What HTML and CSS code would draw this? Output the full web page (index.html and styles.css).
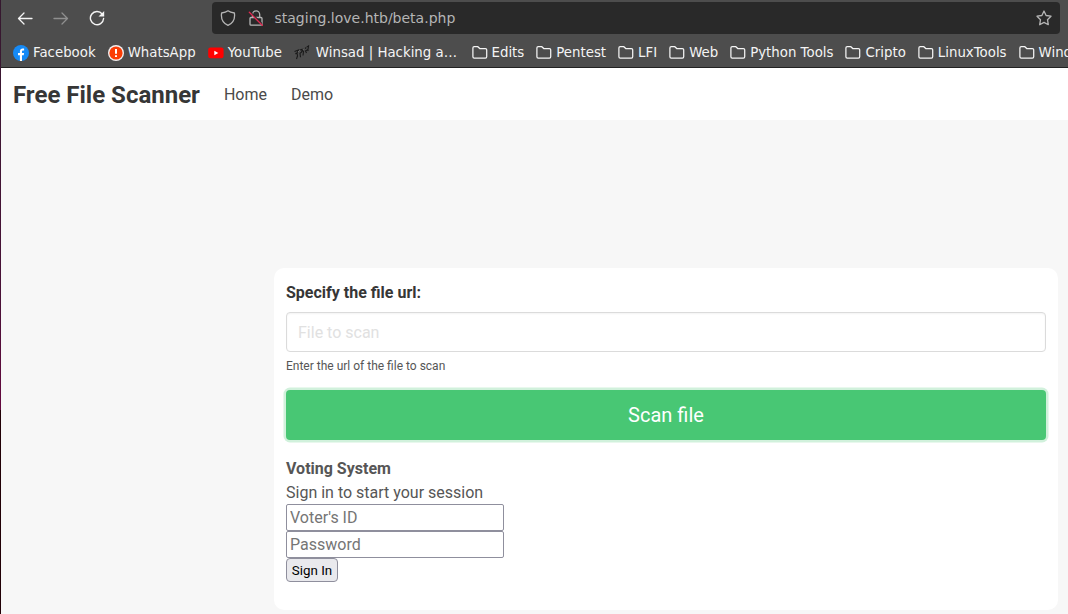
FILE: index.html
```
<!DOCTYPE html>
<html lang="en">
<head>
<meta charset="utf-8">
<title>Free File Scanner</title>
<link rel="stylesheet" href="styles.css">
</head>
<body>
<svg class="defs" width="0" height="0"><symbol id="folder" viewBox="0 0 16 16"><path d="M2.2 1.700h3.600l2 1.800h5.600q1.300 0 1.300 1.300v6.900q0 1.300-1.300 1.300H2.200Q.9 13 .9 11.700V3Q.9 1.700 2.200 1.700z" fill="none" stroke="#f4f4f4" stroke-width="1.250"/></symbol></svg>
<div class="window">
  <header class="chrome">
    <div class="toolbar">
      <div class="controls">
        <svg class="icon" viewBox="0 0 16 16"><path d="M15 8.500H1.500M7 3L1.500 8.500 7 14" fill="none" stroke="#f4f4f4" stroke-width="1.300" stroke-linecap="round" stroke-linejoin="round"/></svg>
        <svg class="icon" viewBox="0 0 16 16"><path d="M1 8.500h13.500M9 3l5.500 5.500L9 14" fill="none" stroke="#8f8f8f" stroke-width="1.300" stroke-linecap="round" stroke-linejoin="round"/></svg>
        <svg class="icon" viewBox="0 0 16 16"><path d="M13.200 4A6.600 6.600 0 1 0 14.600 8.500" fill="none" stroke="#f4f4f4" stroke-width="1.400" stroke-linecap="round"/><path d="M15.200 1v5.500H9.500z" fill="#f4f4f4"/></svg>
      </div>
      <div class="address">
        <svg class="icon" viewBox="0 0 16 16"><path d="M8 .8c2 1.500 4 1.900 6.400 2.200.8 5.500-1.700 10.200-6.400 12.400C3.300 13.200.8 8.500 1.600 3 4 2.700 6 2.300 8 .8z" fill="none" stroke="#b5b5b5" stroke-width="1.300" stroke-linejoin="round"/></svg>
        <svg class="icon lock" viewBox="0 0 16 16"><path d="M4.500 7V4.500a3.600 3.600 0 0 1 7.200 0V7M3 7.500h10q1 0 1 1v5.700q0 1-1 1H3q-1 0-1-1V8.500q0-1 1-1z" fill="none" stroke="#b5b5b5" stroke-width="1.300"/><path d="M2.500 2.300l11.400 11.400" stroke="#292929" stroke-width="1.500"/><path d="M1.300 2.300l13 12.900" stroke="#e22850" stroke-width="1.300" stroke-linecap="round"/></svg>
        <span class="url">staging.love.htb/beta.php</span>
        <svg class="icon" viewBox="0 0 16 16"><path d="M8 1l2.100 4.500 4.900.7-3.500 3.500.8 5-4.300-2.300-4.300 2.300.8-5L1 6.200l4.900-.7z" fill="none" stroke="#b5b5b5" stroke-width="1.300" stroke-linejoin="round"/></svg>
      </div>
    </div>
    <nav class="bookmarks">
      <a class="mark"><svg class="icon" viewBox="0 0 16 16"><circle cx="8" cy="8" r="8" fill="#168af5"/><path d="M6.900 16V10.300H5V8h1.900V6.400c0-2 1.100-3 2.800-3l1.400.1v1.900h-.9c-.9 0-1.200.5-1.200 1.200V8h2.100l-.4 2.300H9V16z" fill="#fff"/></svg>Facebook</a>
      <a class="mark"><svg class="icon" viewBox="0 0 16 16"><circle cx="8" cy="8" r="8" fill="#f4eeee"/><circle cx="8" cy="8" r="6.600" fill="#fa3c05"/><path d="M7 4h2v4.800H7zM7 10.200h2v1.900H7z" fill="#fff"/></svg>WhatsApp</a>
      <a class="mark"><svg class="icon" viewBox="0 0 16 16"><rect x=".2" y="2.500" width="15.400" height="10.800" rx="2.300" fill="#f00"/><path d="M6.300 5.700v4.600l4-2.300z" fill="#fff"/></svg>YouTube</a>
      <a class="mark winsad"><svg class="icon" viewBox="0 0 16 16"><path d="M.5 6.500l4-1.500-1.500 3 .5 3-1 3M1.500 9l1-1M6 5l2.500-.8-1 3-1.500 1 .5 4M8.500 5.500l1 1-.5 4M11 3.500l3.500-2.500-.5 3.500-2.500 1.500 1 2M13.500 4.500l.8 1.500" fill="none" stroke="#191919" stroke-width="1.100"/><path d="M4 7l1.500-1.500M8.500 4l1.200.8M12.500 3l1-1" stroke="#888" stroke-width=".6"/></svg>Winsad | Hacking a…</a>
      <a class="mark"><svg class="icon"><use href="#folder"/></svg>Edits</a>
      <a class="mark"><svg class="icon"><use href="#folder"/></svg>Pentest</a>
      <a class="mark"><svg class="icon"><use href="#folder"/></svg>LFI</a>
      <a class="mark"><svg class="icon"><use href="#folder"/></svg>Web</a>
      <a class="mark"><svg class="icon"><use href="#folder"/></svg>Python Tools</a>
      <a class="mark"><svg class="icon"><use href="#folder"/></svg>Cripto</a>
      <a class="mark"><svg class="icon"><use href="#folder"/></svg>LinuxTools</a>
      <a class="mark"><svg class="icon"><use href="#folder"/></svg>Wind</a>
    </nav>
  </header>
  <nav class="navbar"><span class="brand">Free File Scanner</span><a>Home</a><a>Demo</a></nav>
  <main class="content">
    <section class="card">
      <label class="label" for="file">Specify the file url:</label>
      <input class="file-input" id="file" placeholder="File to scan">
      <p class="help">Enter the url of the file to scan</p>
      <button class="scan">Scan file</button>
      <div class="login">
        <b>Voting System</b>
        <p>Sign in to start your session</p>
        <input class="field" placeholder="Voter's ID">
        <input class="field" placeholder="Password">
        <button class="signin">Sign In</button>
      </div>
    </section>
  </main>
</div>
</body>
</html>
```
FILE: styles.css
```
* { box-sizing: border-box; }
body { margin: 0; height: 614px; overflow: hidden; background: linear-gradient(#35182f 0, #4a1137 300px, #65083f 410px, #210006 410px, #210006 100%); font: 16px/24px Roboto, sans-serif; color: #4a4a4a; }
p { margin: 0; }
input, button { font-family: inherit; margin: 0; }
.defs { position: absolute; }
.window { margin-left: 1px; height: 614px; background: #f7f7f7; overflow: hidden; }
.chrome { height: 68px; background: #4d4d4d; border-bottom: 1px solid #222; font: 13.333px/18px "DejaVu Sans", sans-serif; color: #f4f4f4; }
.icon { width: 16px; height: 16px; flex: none; display: block; }
.toolbar { display: flex; height: 36px; padding: 2px 8px 2px 16px; }
.controls { display: flex; align-items: center; gap: 20px; width: 195px; }
.address { flex: 1; height: 32px; display: flex; align-items: center; padding: 0 8px; border-radius: 4px; background: #292929; color: #b5b5b5; }
.lock { margin: 0 10.500px 0 12px; }
.url { flex: 1; font-size: 14px; }
.bookmarks { display: flex; gap: 12px; height: 32px; padding: 2px 0 0 12px; align-items: center; white-space: nowrap; }
.mark { display: flex; align-items: center; gap: 4px; flex: none; }
.winsad { gap: 6px; padding-right: 2.500px; }
.navbar { height: 52px; display: flex; align-items: center; gap: 24px; padding: 2px 0 0 12px; background: #fff; }
.brand { font-size: 24px; font-weight: 700; color: #363636; }
.content { padding: 148px 10px 4px 273px; }
.card { height: 342px; padding: 13px 12px 12px; border-radius: 10px; background: #fff; color: #565656; }
.label { display: block; font-weight: 700; color: #363636; margin-bottom: 7px; }
.file-input { display: block; width: 100%; height: 40px; border: 1px solid #dbdbdb; border-radius: 4px; padding: 0 11px; font-size: 16px; box-shadow: inset 0 1px 2px rgba(10,10,10,.05); }
.file-input::placeholder { color: #e1e1e1; }
.help { margin-top: 4px; font-size: 12px; line-height: 18px; height: 34px; padding-top: 1px; }
.scan { display: block; width: 100%; height: 50px; border: 0; border-radius: 4px; background: #48c774; color: #fff; font-size: 20px; box-shadow: 0 0 0 2.500px rgba(72,199,116,.25); }
.login { padding-top: 17px; }
.login p { height: 23px; }
.field { display: block; width: 218px; height: 27px; border: 1px solid #8f8f9d; border-radius: 2px; padding: 1px 3px; font-size: 16px; }
.field::placeholder { color: #757575; }
.signin { display: block; width: 52px; height: 24px; padding: 0; border: 1px solid #8f8f9d; border-radius: 4px; background: #e9e9ed; color: #000; font-size: 13.333px; }
```
